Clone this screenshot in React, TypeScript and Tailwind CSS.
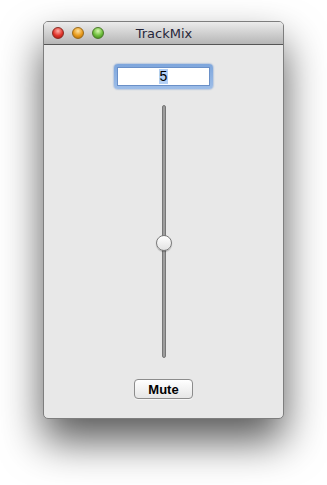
export default function App() {
  return (
    <div className="w-[327px] h-[485px] bg-white overflow-hidden" style={{ fontFamily: '"Liberation Sans", Arial, sans-serif' }}>
      <div className="ml-[43px] mt-[21px] w-[241px] h-[398px] rounded-[5px] bg-[#e8e8e8] border border-[#7e7e7e] shadow-[0_22px_42px_rgba(0,0,0,0.65)] flex flex-col overflow-hidden">
        {/* Title bar */}
        <div className="relative h-[23px] shrink-0 bg-gradient-to-b from-[#ececec] to-[#b6b6b6] border-b border-[#555] flex items-center justify-center">
          <div className="absolute left-[8px] top-[5px] flex gap-[8px]">
            <span className="w-[12px] h-[12px] rounded-full bg-[radial-gradient(circle_at_50%_30%,#ffb0a8,#e0332a_55%,#9a1710)] border border-[#8a2a22]" />
            <span className="w-[12px] h-[12px] rounded-full bg-[radial-gradient(circle_at_50%_30%,#ffe2a0,#e89a1a_55%,#a5650a)] border border-[#9a6a1a]" />
            <span className="w-[12px] h-[12px] rounded-full bg-[radial-gradient(circle_at_50%_30%,#d8f8b0,#6cbd3a_55%,#3a7a18)] border border-[#4a7a2a]" />
          </div>
          <span className="text-[13px] text-[#26263a] leading-none pl-[1px]" style={{ fontFamily: '"DejaVu Sans", sans-serif' }}>TrackMix</span>
        </div>

        {/* Content */}
        <div className="flex flex-col items-center pt-[19px]">
          <div className="w-[99px] h-[25px] rounded-[4px] bg-gradient-to-b from-[#7ea6dc] to-[#9dbde8] p-[3px] shadow-[0_0_2px_#5a86c8]">
            <div className="w-full h-full bg-white border border-[#6a90c8] flex items-center justify-center">
              <span className="text-[14px] leading-[15px] text-black bg-[#b4d0f5] px-[1px]">5</span>
            </div>
          </div>

          {/* Slider */}
          <div className="relative mt-[16px] h-[253px] w-[16px] flex justify-center">
            <div className="w-[4px] h-full rounded-full bg-gradient-to-r from-[#8a8a8a] via-[#b0b0b0] to-[#8a8a8a] border border-[#777]" />
            <div className="absolute left-0 top-[130px] w-[16px] h-[16px] rounded-full bg-gradient-to-b from-[#ffffff] to-[#e2e2e2] border border-[#7a7a7a] shadow-[0_1px_1px_rgba(0,0,0,0.25)]" />
          </div>

          <button className="mt-[21px] w-[59px] h-[20px] rounded-[4px] border border-[#8c8c8c] bg-gradient-to-b from-white to-[#e6e6e6] text-[13px] leading-none text-black font-semibold shadow-[0_1px_0_rgba(255,255,255,0.6)]">
            Mute
          </button>
        </div>
      </div>
    </div>
  );
}
